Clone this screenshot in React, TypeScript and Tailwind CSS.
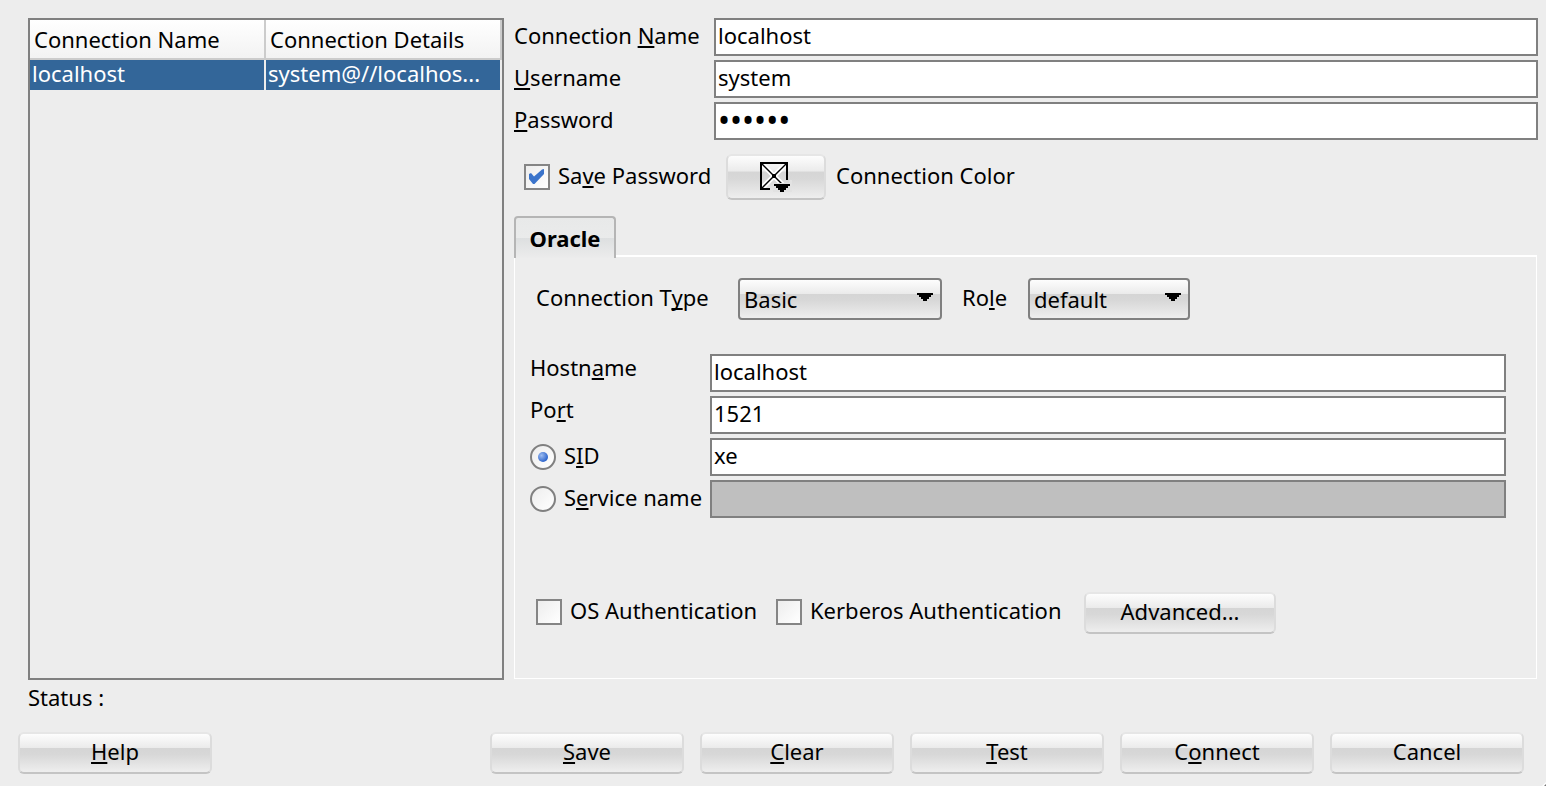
import { useId, useState } from 'react';
import type { InputHTMLAttributes, ReactNode } from 'react';

function Key({ children }: { children: ReactNode }) {
  return (
    <span className="underline decoration-2 underline-offset-2 [text-decoration-skip-ink:none]">{children}</span>
  );
}

function PushButton({ children, className = '', label }: { children: ReactNode; className?: string; label?: string }) {
  return (
    <button
      type="button"
      aria-label={label}
      className={`flex shrink-0 items-center justify-center rounded-md border-2 border-[#dcdcdc] border-t-[#e6e6e6] border-b-[#c4c4c4] bg-[linear-gradient(to_bottom,#fdfdfd_0%,#ebebeb_36%,#d5d5d5_38%,#d8d8d8_55%,#eeeeee_100%)] ${className}`}
    >
      {children}
    </button>
  );
}

function TextField({ className = 'text-[22px]', ...rest }: InputHTMLAttributes<HTMLInputElement>) {
  return (
    <input
      className={`h-[38px] w-full min-w-0 border-2 border-[#808080] bg-white px-0.5 pb-1 outline-none disabled:bg-[#bfbfbf] ${className}`}
      {...rest}
    />
  );
}

function CheckBox({ children, checked = false }: { children: ReactNode; checked?: boolean }) {
  const [on, setOn] = useState(checked);
  return (
    <label className="flex shrink-0 items-center gap-2 whitespace-nowrap">
      <span className="grid size-[26px]">
        <input
          type="checkbox"
          checked={on}
          onChange={(e) => setOn(e.target.checked)}
          className="col-start-1 row-start-1 size-[26px] appearance-none border-2 border-[#858585] bg-linear-to-br from-[#ededed] to-white"
        />
        {on && (
          <svg viewBox="0 0 26 26" aria-hidden="true" className="pointer-events-none col-start-1 row-start-1 size-[26px]">
            <path d="M5 10L7 9L10 12.5L18 5.5L20 5V10L10.5 20H9L5 15Z" fill="#3b74cb" />
          </svg>
        )}
      </span>
      <span className="pb-1">{children}</span>
    </label>
  );
}

function Radio({ children, checked, onSelect }: { children: ReactNode; checked: boolean; onSelect: () => void }) {
  return (
    <label className="flex items-center gap-2 whitespace-nowrap">
      <span className="grid size-[26px] shrink-0 place-items-center">
        <input
          type="radio"
          name="identifier"
          checked={checked}
          onChange={onSelect}
          className="col-start-1 row-start-1 size-[26px] appearance-none rounded-full border-2 border-[#808080] bg-linear-to-br from-[#ededed] to-white"
        />
        {checked && (
          <span className="pointer-events-none col-start-1 row-start-1 size-[10px] rounded-full bg-[radial-gradient(circle_at_35%_35%,#9dbcf0,#2f66cc_70%)]" />
        )}
      </span>
      <span className="pb-1">{children}</span>
    </label>
  );
}

function DropDown({ id, options, className }: { id: string; options: string[]; className: string }) {
  return (
    <span className={`grid items-center ${className}`}>
      <select
        id={id}
        className="col-start-1 row-start-1 h-[42px] w-full appearance-none rounded-[4px] border-2 border-[#808080] bg-[linear-gradient(to_bottom,#fdfdfd_0%,#ebebeb_36%,#d5d5d5_38%,#d8d8d8_55%,#eeeeee_100%)] pl-1 outline-none"
      >
        {options.map((o) => (
          <option key={o}>{o}</option>
        ))}
      </select>
      <svg viewBox="0 0 16 8" aria-hidden="true" className="pointer-events-none col-start-1 row-start-1 mr-[9px] mb-1 h-2 w-4 justify-self-end">
        <path d="M0 0H16V2H14V4H12V6H10V8H6V6H4V4H2V2H0Z" fill="#000" />
      </svg>
    </span>
  );
}

export default function App() {
  const id = useId();
  const [mode, setMode] = useState<'sid' | 'service'>('sid');

  return (
    <div className="relative flex min-h-screen flex-col bg-[#ededed] pt-[18px] pb-3 font-['Noto_Sans',sans-serif] text-[22px] leading-7 text-black">
      <div className="flex grow gap-2.5 pr-2 pl-7">
        <section className="w-[476px] shrink-0 border-2 border-[#808080]">
          <table className="w-full table-fixed border-separate border-spacing-0">
            <thead>
              <tr className="h-10 bg-linear-to-b from-white to-[#f2f2f2]">
                <th className="w-1/2 border-r-2 border-b-2 border-[#cccccc] pl-1 text-left font-normal whitespace-nowrap">Connection Name</th>
                <th className="w-1/2 border-r-2 border-b-2 border-[#cccccc] pl-1 text-left font-normal whitespace-nowrap">Connection Details</th>
              </tr>
            </thead>
            <tbody>
              <tr className="h-[30px] leading-6 text-white">
                <td className="border-r-2 border-[#ededed] bg-[#336699] pb-1 pl-0.5 whitespace-nowrap">localhost</td>
                <td className="border-r-2 border-[#ededed] bg-[#336699] pb-1 pl-0.5 whitespace-nowrap">system@//localhos...</td>
              </tr>
            </tbody>
          </table>
        </section>

        <form className="flex min-w-0 grow flex-col" onSubmit={(e) => e.preventDefault()}>
          <div className="grid grid-cols-[200px_1fr] items-center gap-y-1">
            <label htmlFor={`${id}-name`} className="pb-1 whitespace-nowrap">Connection <Key>N</Key>ame</label>
            <TextField id={`${id}-name`} defaultValue="localhost" />
            <label htmlFor={`${id}-user`} className="pb-1"><Key>U</Key>sername</label>
            <TextField id={`${id}-user`} defaultValue="system" />
            <label htmlFor={`${id}-pass`} className="pb-1"><Key>P</Key>assword</label>
            <TextField id={`${id}-pass`} type="password" defaultValue="oracle" className="text-[32px]" />
          </div>

          <div className="mt-[14px] flex items-center gap-2.5 pl-2.5">
            <div className="w-[192px]">
              <CheckBox checked>Sa<Key>v</Key>e Password</CheckBox>
            </div>
            <PushButton className="h-[46px] w-[100px]" label="Choose connection color">
              <svg viewBox="0 0 32 30" aria-hidden="true" className="h-[30px] w-8">
                <path d="M3 3L25 25M25 3L3 25" fill="none" stroke="#fff" strokeWidth="5" />
                <path d="M2 2L26 26M26 2L2 26" fill="none" stroke="#000" strokeWidth="1.4" />
                <path d="M12 12H16V16H12Z" fill="#000" />
                <path d="M13 21H29V18H32V30H13Z" fill="#e2e2e2" />
                <path d="M27 18V1H1V27H10" fill="none" stroke="#000" strokeWidth="2" />
                <path d="M14 22H30V24H28V26H26V28H24V30H20V28H18V26H16V24H14Z" fill="#000" />
              </svg>
            </PushButton>
            <span className="pb-1">Connection Color</span>
          </div>

          <div role="tablist" className="relative mt-4 flex">
            <button
              type="button"
              role="tab"
              aria-selected="true"
              className="z-10 -mb-[3px] h-[42px] w-[102px] rounded-t-[4px] border-2 border-b-0 border-[#b5b5b5] bg-[linear-gradient(to_bottom,#e8e9e9_0%,#eaebeb_49%,#dddfe0_50%,#ececec_100%)] font-bold"
            >
              Oracle
            </button>
          </div>

          <div role="tabpanel" className="mr-px mb-px grow border border-t-2 border-white pr-[30px]">
            <div className="mt-[21px] flex items-center pl-[21px]">
              <label htmlFor={`${id}-type`} className="w-[202px] pb-1 whitespace-nowrap">Connection T<Key>y</Key>pe</label>
              <DropDown id={`${id}-type`} options={['Basic', 'TNS', 'LDAP', 'Advanced']} className="w-[204px]" />
              <label htmlFor={`${id}-role`} className="ml-5 w-[66px] pb-1">Ro<Key>l</Key>e</label>
              <DropDown id={`${id}-role`} options={['default', 'SYSDBA', 'SYSOPER']} className="w-[162px]" />
            </div>

            <div className="mt-[34px] grid grid-cols-[180px_1fr] items-center gap-y-1 pl-[15px]">
              <label htmlFor={`${id}-host`} className="pb-3 leading-6">Hostn<Key>a</Key>me</label>
              <TextField id={`${id}-host`} defaultValue="localhost" />
              <label htmlFor={`${id}-port`} className="pb-3 leading-6">Po<Key>r</Key>t</label>
              <TextField id={`${id}-port`} defaultValue="1521" />
              <Radio checked={mode === 'sid'} onSelect={() => setMode('sid')}>S<Key>I</Key>D</Radio>
              <TextField aria-label="SID value" defaultValue="xe" disabled={mode !== 'sid'} />
              <Radio checked={mode === 'service'} onSelect={() => setMode('service')}>S<Key>e</Key>rvice name</Radio>
              <TextField aria-label="Service name value" disabled={mode !== 'service'} />
            </div>

            <div className="mt-[74px] mb-[43px] flex items-start pl-[21px]">
              <div className="w-60 pt-1">
                <CheckBox>OS Authentication</CheckBox>
              </div>
              <div className="w-[308px] pt-1">
                <CheckBox>Kerberos Authentication</CheckBox>
              </div>
              <PushButton className="h-[42px] w-48 pb-1">Advanced...</PushButton>
            </div>
          </div>
        </form>
      </div>

      <p className="mt-[3px] pl-7">Status :</p>

      <div className="mt-[21px] flex gap-4 pr-[22px] pl-[18px]">
        <PushButton className="mr-auto h-[42px] w-[194px] pb-1"><span><Key>H</Key>elp</span></PushButton>
        <PushButton className="h-[42px] w-[194px] pb-1"><span><Key>S</Key>ave</span></PushButton>
        <PushButton className="h-[42px] w-[194px] pb-1"><span><Key>C</Key>lear</span></PushButton>
        <PushButton className="h-[42px] w-[194px] pb-1"><span><Key>T</Key>est</span></PushButton>
        <PushButton className="h-[42px] w-[194px] pb-1"><span>C<Key>o</Key>nnect</span></PushButton>
        <PushButton className="h-[42px] w-[194px] pb-1">Cancel</PushButton>
      </div>

      <svg viewBox="0 0 4 4" aria-hidden="true" className="absolute right-0 bottom-0 size-1">
        <path d="M4 0V4H0Z" fill="#fff" />
        <path d="M4 2V4H2Z" fill="#777" />
      </svg>
    </div>
  );
}
